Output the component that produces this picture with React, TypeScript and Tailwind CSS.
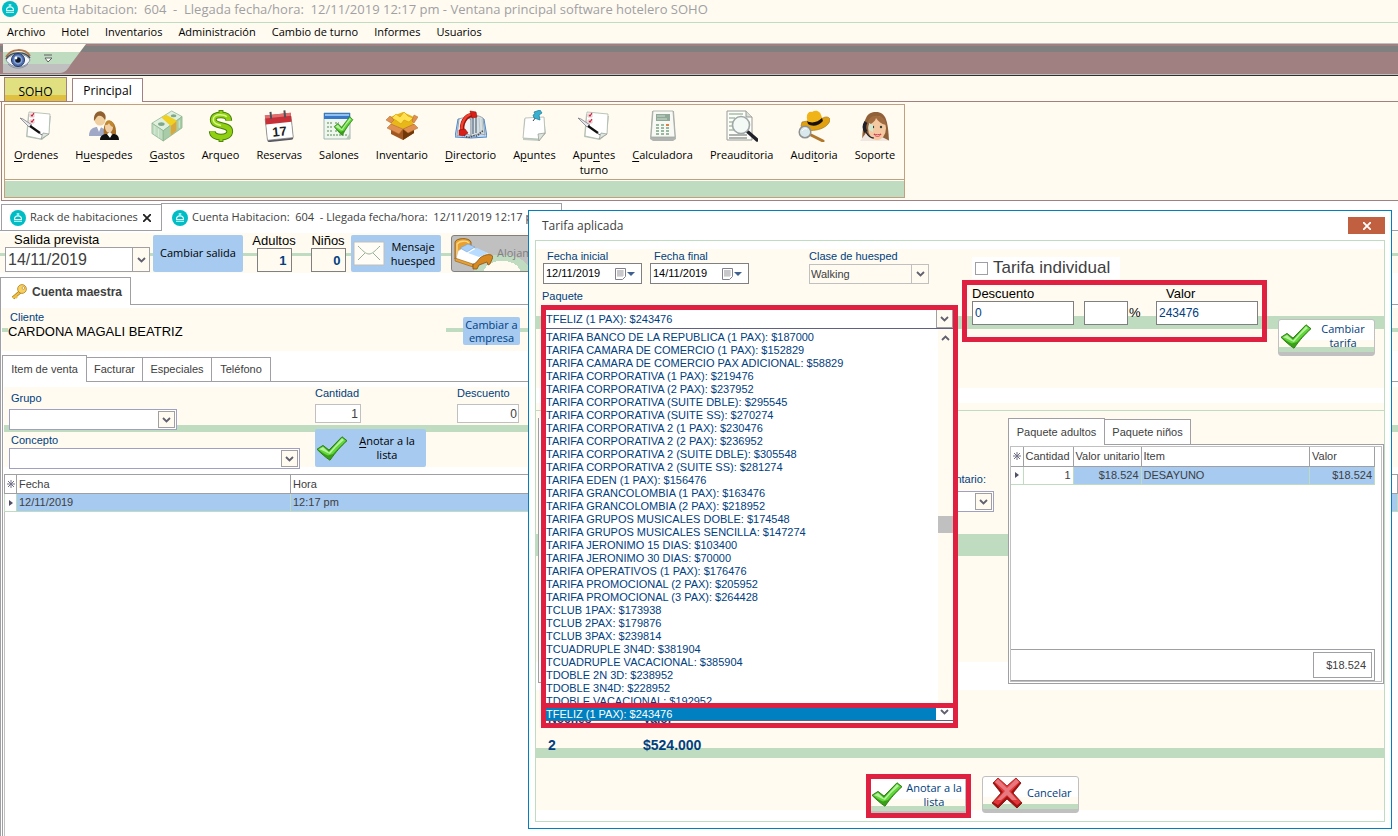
import { useState } from 'react'
import type { ReactNode } from 'react'

const menuItems = ['Archivo', 'Hotel', 'Inventarios', 'Administración', 'Cambio de turno', 'Informes', 'Usuarios']

const tarifas = [
    'TARIFA BANCO DE LA REPUBLICA (1 PAX): $187000',
    'TARIFA CAMARA DE COMERCIO (1 PAX): $152829',
    'TARIFA CAMARA DE COMERCIO PAX ADICIONAL: $58829',
    'TARIFA CORPORATIVA (1 PAX): $219476',
    'TARIFA CORPORATIVA (2 PAX): $237952',
    'TARIFA CORPORATIVA (SUITE DBLE): $295545',
    'TARIFA CORPORATIVA (SUITE SS): $270274',
    'TARIFA CORPORATIVA 2 (1 PAX): $230476',
    'TARIFA CORPORATIVA 2 (2 PAX): $236952',
    'TARIFA CORPORATIVA 2 (SUITE DBLE): $305548',
    'TARIFA CORPORATIVA 2 (SUITE SS): $281274',
    'TARIFA EDEN (1 PAX): $156476',
    'TARIFA GRANCOLOMBIA (1 PAX): $163476',
    'TARIFA GRANCOLOMBIA (2 PAX): $218952',
    'TARIFA GRUPOS MUSICALES DOBLE: $174548',
    'TARIFA GRUPOS MUSICALES SENCILLA: $147274',
    'TARIFA JERONIMO 15 DIAS: $103400',
    'TARIFA JERONIMO 30 DIAS: $70000',
    'TARIFA OPERATIVOS (1 PAX): $176476',
    'TARIFA PROMOCIONAL (2 PAX): $205952',
    'TARIFA PROMOCIONAL (3 PAX): $264428',
    'TCLUB 1PAX: $173938',
    'TCLUB 2PAX: $179876',
    'TCLUB 3PAX: $239814',
    'TCUADRUPLE 3N4D: $381904',
    'TCUADRUPLE VACACIONAL: $385904',
    'TDOBLE 2N 3D: $238952',
    'TDOBLE 3N4D: $228952',
    'TDOBLE VACACIONAL: $192952',
]

// ---- ICONS ----

function BellLogo() {
    return (
        <svg viewBox="0 0 16 16" className="w-4 h-4 shrink-0" aria-hidden="true">
            <circle cx="8" cy="8" r="8" fill="#00bcc4" />
            <path d="M4.5 9.5a3.5 3.6 0 0 1 7 0zM4 11.2h8" fill="none" stroke="#e0ffff" strokeWidth="1.1" />
            <path d="M8 3.6v2M6.6 3.9h2.8" stroke="#e0ffff" strokeWidth="1" />
        </svg>
    )
}

function Eye() {
    return (
        <svg viewBox="0 0 26 22" className="w-[26px] h-[22px]" aria-hidden="true">
            <path d="M1 12C5 5 21 4 25 12C21 21 6 21 1 12z" fill="#f4f6fb" stroke="#8890a0" />
            <path d="M1 9C6 0 20 0 25 8" fill="none" stroke="#b07850" strokeWidth="2" />
            <path d="M1 11C6 3 20 3 25 10" fill="none" stroke="#404858" strokeWidth="1.4" />
            <circle cx="13" cy="12" r="6.5" fill="#5070b0" stroke="#203868" />
            <circle cx="13" cy="12" r="4.4" fill="#88a8dc" />
            <circle cx="13" cy="12" r="2.8" fill="#101828" />
            <circle cx="11" cy="10" r="1.4" fill="#fff" />
            <path d="M3 16C8 22 19 21 23 16" fill="none" stroke="#8894a8" />
        </svg>
    )
}

function NotesIcon() {
    return (
        <svg viewBox="0 0 32 32" className="w-8 h-8" aria-hidden="true">
            <path d="M8 4l23 2-2 18-7 6L6 27z" fill="#c0c8c0" />
            <path d="M9 2l21 2-1 20-8 5-14-3z" fill="#fff" stroke="#a8b8a8" strokeWidth=".8" />
            <path d="M29 24l-6-1-2 6z" fill="#dfe8df" stroke="#909890" strokeWidth=".7" />
            <path d="M10 4h4v3h-4zM10 10h4v3h-4z" fill="#fff" stroke="#d8b0b0" strokeWidth=".7" />
            <path d="M11 5l1 1 2-3M11 11l1 1 2-3" fill="none" stroke="#d02040" strokeWidth="1.2" />
            <path d="M0 8l3 1 9 6-3 2z" fill="#e8e8ec" stroke="#707078" strokeWidth=".7" />
            <path d="M10 16l10 7" stroke="#101010" strokeWidth="2.2" />
            <path d="M19 23l3 2" stroke="#606060" />
        </svg>
    )
}

function PeopleIcon() {
    return (
        <svg viewBox="0 0 32 32" className="w-8 h-8" aria-hidden="true">
            <path d="M1 26c0-7 4-9 9-9s8 3 8 9z" fill="#a0a8c8" />
            <path d="M9 17l2 5 2-5z" fill="#fff" />
            <circle cx="12" cy="10" r="5.5" fill="#f0d0a0" />
            <path d="M6 11C5 2 12-1 16 3c2 2 2 5 1 7-2-4-5-5-7-4-2 1-2 3-4 5z" fill="#906030" />
            <path d="M16 25c-3-18 13-19 12-1l-3 2z" fill="#a87028" />
            <ellipse cx="21" cy="17" rx="4" ry="5.5" fill="#f0d0a8" />
            <path d="M17 15c0-6 8-7 9 2-3 0-4-2-5-4-1 2-2 2-4 2z" fill="#c08830" />
            <path d="M12 30c0-5 4-6 7-6l3 3 3-3c3 0 6 1 6 6z" fill="#101010" />
            <path d="M19 24l3 4 2-4-2-2z" fill="#fff" />
        </svg>
    )
}

function MoneyIcon() {
    return (
        <svg viewBox="0 0 34 34" className="w-8 h-8" aria-hidden="true">
            <path d="M1 14L22 1l11 6v11L13 33 1 25z" fill="#b8d8b8" />
            <path d="M1 14L22 1l11 6L13 22z" fill="#e0f0e0" stroke="#88b088" strokeWidth=".7" />
            <path d="M1 14v11l12 8V22z" fill="#c0dcc0" stroke="#88b088" strokeWidth=".7" />
            <path d="M13 22v11l20-14V7z" fill="#a8cca8" stroke="#88b088" strokeWidth=".7" />
            <path d="M11 8l5-3 11 6v10l-6 5v-9z" fill="#f0d020" />
            <path d="M21 17l6-5v10l-6 5z" fill="#d8a840" />
            <ellipse cx="11" cy="15" rx="3.5" ry="2" fill="#80a888" />
            <ellipse cx="24" cy="6" rx="3" ry="1.6" fill="#80a888" />
            <path d="M4 17v9M8 20v9M30 11v8" stroke="#d8ead8" />
        </svg>
    )
}

function DollarIcon() {
    const s = 'M24 11c0-4-3-6-8-6-5 0-8 2-8 5 0 8 17 4 17 12 0 4-4 6-9 6s-9-2-9-6'
    return (
        <svg viewBox="0 0 32 33" className="w-8 h-8" aria-hidden="true">
            <path d="M16 0v7M16 26v7" stroke="#508818" strokeWidth="5" />
            <path d={s} fill="none" stroke="#488010" strokeWidth="7" />
            <path d="M16 1v6M16 26v6" stroke="#90d010" strokeWidth="3" />
            <path d={s} fill="none" stroke="#90d010" strokeWidth="5" />
            <path d="M22 7c-2-2-4-2-7-2-4 0-7 2-7 5 0 4 4 5 8 6" fill="none" stroke="#d8f890" strokeWidth="1.6" />
        </svg>
    )
}

function CalendarIcon() {
    return (
        <svg viewBox="0 0 32 32" className="w-8 h-8" aria-hidden="true">
            <g transform="rotate(-6 16 16)">
                <rect x="3" y="9" width="26" height="22" rx="2" fill="#585860" />
                <rect x="3" y="7" width="26" height="22" rx="1" fill="#fff" stroke="#808080" strokeWidth=".7" />
                <path d="M3 4h26v9H3z" fill="#c83038" />
                <path d="M3 4h26v3H3z" fill="#e07070" />
                <path d="M9 1v7M23 1v7" stroke="#505058" strokeWidth="2" />
                <text x="16" y="26" textAnchor="middle" fontFamily="Liberation Sans, sans-serif" fontWeight="bold" fontSize="13" fill="#202020">17</text>
            </g>
        </svg>
    )
}

function CheckPath() {
    return (
        <>
            <path d="M1 17l6-5 6 6L26 1l5 5c-6 7-11 14-17 25C9 27 5 22 1 17z" fill="#38a018" stroke="#287810" strokeWidth="1" />
            <path d="M2 17l5-4 6 7L26 2l4 4c-5 6-9 11-13 17l-5 2C8 23 5 20 2 17z" fill="#60d838" />
            <path d="M3 17l4-3 6 7L26 3l2 2C22 11 17 18 14 23 10 21 6 18 3 17z" fill="#b8f0a0" />
        </>
    )
}

function RoomsIcon() {
    return (
        <svg viewBox="0 0 32 32" className="w-8 h-8" aria-hidden="true">
            <path d="M1 3h26v26H1z" fill="#eef6ee" stroke="#a0b8b0" />
            <path d="M1 3h26v6H1z" fill="#3878c8" />
            <path d="M2 4h24v2H2z" fill="#90c0f0" />
            <path d="M4 13h5M4 17h5M4 21h5M4 25h20M12 21h8M12 13h4" stroke="#a0c0a0" strokeWidth="2" strokeDasharray="2 1" />
            <path d="M23 29l4-6v6z" fill="#b8c8b8" />
            <svg x="9" y="6" width="23" height="20" viewBox="0 0 32 32"><CheckPath /></svg>
        </svg>
    )
}

function BoxIcon() {
    return (
        <svg viewBox="0 0 32 32" className="w-8 h-8" aria-hidden="true">
            <path d="M5 14l12 5 11-5v9l-11 7L5 24z" fill="#a05820" />
            <path d="M17 19l11-5v9l-11 7z" fill="#703808" />
            <path d="M4 7l13-5 11 5-1 8-10 4-12-5z" fill="#e8b818" />
            <path d="M6 8l4-4 4 3 4-5 4 4 5 2-4 4-5-2-3 4-4-3z" fill="#ffe050" stroke="#d09810" strokeWidth=".6" />
            <path d="M5 13l-5-3 4-4 4 4zM5 14l-4 4 12 6 4-5zM28 14l4 4-10 5-5-4zM28 13l4-6-4-2-2 6z" fill="#e09050" stroke="#b06828" strokeWidth=".5" />
        </svg>
    )
}

function PhoneBookIcon() {
    return (
        <svg viewBox="0 0 32 32" className="w-8 h-8" aria-hidden="true">
            <path d="M3 9h26l3 18-16 1-16-1z" fill="#c8dcf4" stroke="#4888d0" />
            <path d="M4 9c5-2 9-2 12 1v16c-4-3-9-2-14 0z" fill="#f0f4f4" stroke="#808890" strokeWidth=".7" />
            <path d="M16 7c4-2 7-2 12 1l2 17c-5-2-10-1-14 2z" fill="#d8e0e0" stroke="#808890" strokeWidth=".7" />
            <path d="M18 8v16M21 7v16" stroke="#8898a8" strokeWidth="2" />
            <path d="M24 8l1 15M27 9l1 14" stroke="#b8c8d0" />
            <path d="M9 25c5 5 8 0 11 1s5-4 8-5" fill="none" stroke="#505050" strokeWidth="1.6" strokeDasharray="1.5 1" />
            <path d="M8 23C5 13 11 5 18 5" fill="none" stroke="#a01008" strokeWidth="4.5" />
            <path d="M7 22C5 13 11 4 18 4" fill="none" stroke="#f04030" strokeWidth="2.5" />
            <path d="M15 1l6 1 1 5-5 1zM4 20l6-1 3 4-5 3-4-1z" fill="#d82018" stroke="#901008" strokeWidth=".6" />
        </svg>
    )
}

function PinNoteIcon() {
    return (
        <svg viewBox="0 0 32 32" className="w-8 h-8" aria-hidden="true">
            <path d="M6 9l20-2 2 16-7 8-16-1z" fill="#c0ccc0" />
            <path d="M7 8l19-1 1 17-7 5-15-1z" fill="#fff" stroke="#b0b8b0" strokeWidth=".8" />
            <path d="M27 23l-7 1 1 7z" fill="#dce4dc" stroke="#909890" strokeWidth=".7" />
            <path d="M15 11l3-4" stroke="#404040" />
            <path d="M16 2l6-2 2 3-3 2 1 5-6-2-1-3 2-1z" fill="#38b0d0" stroke="#187898" strokeWidth=".7" />
        </svg>
    )
}

function CalculatorIcon() {
    return (
        <svg viewBox="0 0 32 32" className="w-8 h-8" aria-hidden="true">
            <path d="M5 1h22l2 28-3 2H6l-3-2z" fill="#b0b4b0" />
            <path d="M6 1h20l2 26H4z" fill="#f8f8f4" stroke="#a0a8a0" strokeWidth=".8" />
            <path d="M9 4h14v7H9z" fill="#90a898" />
            <path d="M10 6h8M10 9h10" stroke="#d0e0d0" />
            <path d="M9 15h3M14 15h3M9 18h3M14 18h3M19 18h3M9 21h3M14 21h3M19 21h3M9 24h3M14 24h3M19 24h3" stroke="#98b8a0" strokeWidth="2" />
            <path d="M19 15h3" stroke="#e08040" strokeWidth="2" />
        </svg>
    )
}

function AuditIcon() {
    return (
        <svg viewBox="0 0 32 32" className="w-8 h-8" aria-hidden="true">
            <path d="M1 1h19l6 6v23H1z" fill="#fdfdfa" stroke="#989c98" />
            <path d="M20 1v6h6" fill="#d8e0d8" stroke="#989c98" />
            <path d="M3 4h14M3 8h6M3 12h4M3 16h4M3 20h6" stroke="#a8c0a8" strokeWidth="1.5" />
            <path d="M3 25h18M3 28h18" stroke="#b0b4b0" strokeWidth="2" />
            <path d="M22 22l9 8" stroke="#202028" strokeWidth="3.4" strokeLinecap="round" />
            <circle cx="15" cy="15" r="8.5" fill="#f4faf6" stroke="#a0a8a8" strokeWidth="1.6" />
        </svg>
    )
}

function HatIcon() {
    return (
        <svg viewBox="0 0 32 32" className="w-8 h-8" aria-hidden="true">
            <path d="M3 16c3 8 27 5 29-6 0-3-4-4-7-2L4 12z" fill="#e0a010" stroke="#a06808" strokeWidth=".6" />
            <path d="M9 9c-1-5 2-8 5-7 4-3 9-1 10 6l1 3c-4 5-11 6-15 3z" fill="#f0b418" />
            <path d="M9 11c5 3 11 1 15-3l1 3c-4 5-11 6-15 3z" fill="#181008" />
            <path d="M11 24l14 7" stroke="#b07828" strokeWidth="3" strokeLinecap="round" />
            <circle cx="7" cy="22" r="5.8" fill="#d8e8ec" stroke="#909090" strokeWidth="1.5" />
            <path d="M4 21c1-2 3-3 5-2" stroke="#fff" fill="none" />
        </svg>
    )
}

function SupportIcon() {
    return (
        <svg viewBox="0 0 32 32" className="w-8 h-8" aria-hidden="true">
            <path d="M3 31C4 8 8 2 17 2c10 0 12 9 13 29z" fill="#906038" />
            <path d="M1 31l6-8 7 6 9-2 8 4z" fill="#f0e8e0" />
            <ellipse cx="18" cy="18" rx="9" ry="12" fill="#f4c8a0" />
            <path d="M8 16C9 7 14 5 19 6c5 0 8 5 8 9-5-1-8-4-10-7-1 4-5 6-9 8z" fill="#a06c40" />
            <circle cx="14" cy="17" r="1.2" fill="#304030" />
            <circle cx="22" cy="17" r="1.2" fill="#304030" />
            <path d="M10 13l4 2v7l-4-2z" fill="#d0e8d0" />
            <path d="M15 24c2 1 5 1 7 0-1 3-6 3-7 0z" fill="#fff" stroke="#d03040" strokeWidth="1" />
            <path d="M7 12c-2 3-2 7 0 10" stroke="#202028" strokeWidth="3.5" fill="none" />
            <path d="M7 22c2 4 5 6 8 6" stroke="#202028" strokeWidth="1.2" fill="none" />
        </svg>
    )
}

function CheckIcon() {
    return (
        <svg viewBox="0 0 32 32" preserveAspectRatio="none" className="w-8 h-[25px] shrink-0" aria-hidden="true">
            <CheckPath />
        </svg>
    )
}

function CrossIcon() {
    return (
        <svg viewBox="0 0 32 32" className="w-8 h-8 shrink-0" aria-hidden="true">
            <path d="M2 6l5-5 9 8 9-8 5 5-8 10 9 10-5 5-10-9-9 9-6-5 9-10z" fill="#a81010" stroke="#780808" strokeWidth=".8" />
            <path d="M3 5l4-4 9 8 9-8 4 4-9 10 10 10-4 3-10-9-9 9-5-3 10-10z" fill="#e03838" />
            <path d="M4 5l3-3 9 9 9-9 3 3-10 9 8 9h-5l-5-5-6 5H6l8-9z" fill="#e87880" />
        </svg>
    )
}

function EnvelopeIcon() {
    return (
        <svg viewBox="0 0 32 25" className="w-8 h-[25px] shrink-0" aria-hidden="true">
            <path d="M1 1h30v23H1z" fill="#fffdf6" stroke="#c0c0b8" />
            <path d="M5 5c5 5 8 8 11 8s6-3 11-8M5 19l7-7M27 19l-7-7" fill="none" stroke="#98b098" />
        </svg>
    )
}

function BedIcon() {
    return (
        <svg viewBox="0 0 40 32" className="w-10 h-8 shrink-0" aria-hidden="true">
            <path d="M2 21V4c1-4 14-5 16 0v5L6 22z" fill="#e8a030" stroke="#805010" strokeWidth=".8" />
            <path d="M4 18V6c2-3 10-4 12-1" fill="none" stroke="#ffd880" strokeWidth="1.4" />
            <path d="M5 13l9-6 23 9-3 9-12 3L3 21z" fill="#fff" stroke="#c0b8a8" strokeWidth=".6" />
            <path d="M7 10l8-4 7 3-8 5z" fill="#a8d0f8" stroke="#6898d0" strokeWidth=".5" />
            <path d="M15 15l9-5 11 5-9 4z" fill="#b8dcff" />
            <path d="M2 20l18 6v3L2 23z" fill="#e8a030" stroke="#805010" strokeWidth=".5" />
            <path d="M20 31v-5c4 0 5-6 10-8 4-2 9-2 10 1l-3 7-2 1-1-3-8 3-2 4z" fill="#d88820" stroke="#805010" strokeWidth=".8" />
        </svg>
    )
}

function KeyIcon() {
    return (
        <svg viewBox="0 0 16 16" className="w-4 h-4 shrink-0" aria-hidden="true">
            <path d="M9 8l-7 6" stroke="#a87818" strokeWidth="3.6" />
            <path d="M9 8l-7 6M4 12l2 2" stroke="#f0c040" strokeWidth="2.2" />
            <circle cx="11" cy="5" r="4.4" fill="#f8d060" stroke="#b08020" strokeWidth=".8" />
            <circle cx="12.4" cy="4" r="1.3" fill="#fff" stroke="#b08020" strokeWidth=".6" />
        </svg>
    )
}

function CloseMark({ color }: { color: string }) {
    return <svg viewBox="0 0 8 8" className="w-2 h-2" aria-hidden="true"><path d="M0 0l8 8M8 0L0 8" stroke={color} strokeWidth="1.8" /></svg>
}

function Chevron({ up = false }: { up?: boolean }) {
    return (
        <svg viewBox="0 0 9 6" className="w-[9px] h-[6px]" aria-hidden="true">
            <path d={up ? 'M1 5l3.5-3.5L8 5' : 'M1 1l3.5 3.5L8 1'} fill="none" stroke="#606070" strokeWidth="1.8" />
        </svg>
    )
}

function MiniCalendar() {
    return (
        <svg viewBox="0 0 20 12" className="w-5 h-3 shrink-0" aria-hidden="true">
            <path d="M.5.5h10v8l-3 3h-7z" fill="#fff" stroke="#808090" />
            <path d="M2 3h7M2 5h7M2 7h7M3 2v7M5 2v7M7 2v7" stroke="#a0a0a4" strokeWidth=".7" />
            <path d="M12 4h8l-4 4z" fill="#406090" />
        </svg>
    )
}

function RowMark() {
    return <svg viewBox="0 0 4 6" className="w-1 h-1.5 mx-auto" aria-hidden="true"><path d="M0 0l4 3-4 3z" fill="#505068" /></svg>
}

function StarMark() {
    return (
        <svg viewBox="0 0 8 8" className="w-2 h-2 mx-auto" aria-hidden="true">
            <path d="M4 0v8M0 4h8M1 1l6 6M7 1l-6 6" stroke="#707088" strokeWidth="1" />
        </svg>
    )
}

// ---- CONTROLS ----

const ribbon: { icon: ReactNode; label: ReactNode; id: string }[] = [
    { id: 'ordenes', icon: <NotesIcon />, label: <><u>O</u>rdenes</> },
    { id: 'huespedes', icon: <PeopleIcon />, label: <>H<u>u</u>espedes</> },
    { id: 'gastos', icon: <MoneyIcon />, label: <><u>G</u>astos</> },
    { id: 'arqueo', icon: <DollarIcon />, label: 'Arqueo' },
    { id: 'reservas', icon: <CalendarIcon />, label: 'Reservas' },
    { id: 'salones', icon: <RoomsIcon />, label: 'Salones' },
    { id: 'inventario', icon: <BoxIcon />, label: 'Inventario' },
    { id: 'directorio', icon: <PhoneBookIcon />, label: <><u>D</u>irectorio</> },
    { id: 'apuntes', icon: <PinNoteIcon />, label: <>A<u>p</u>untes</> },
    { id: 'turno', icon: <NotesIcon />, label: <>Apu<u>n</u>tes<br />turno</> },
    { id: 'calculadora', icon: <CalculatorIcon />, label: <><u>C</u>alculadora</> },
    { id: 'preauditoria', icon: <AuditIcon />, label: 'Preauditoria' },
    { id: 'auditoria', icon: <HatIcon />, label: <>Audi<u>t</u>oria</> },
    { id: 'soporte', icon: <SupportIcon />, label: 'Soporte' },
]

function Combo({ id, value = '', className = '' }: { id: string; value?: string; className?: string }) {
    return (
        <div className={`flex items-center border border-[#a0a0c0] bg-white p-px ${className}`}>
            <select id={id} className="appearance-none flex-1 min-w-0 h-full pl-px bg-transparent text-[#404040] outline-none">
                <option>{value}</option>
            </select>
            <span className="w-[17px] h-full shrink-0 border border-[#a0a0a4] bg-[#fffbf0] grid place-items-center pointer-events-none">
                <Chevron />
            </span>
        </div>
    )
}

const softButton = 'flex items-center rounded-[3px] border border-[#c0c0c0] pb-[3px] text-[#004080] bg-[linear-gradient(#fff_0_20px,#fffbf0_20px_27px,#c0dcc0_27px_32px,#c0c0c0_32px)]'

// ---- SECTIONS ----

function Header() {
    return (
        <header className="bg-[#fffbf0] font-['Open_Sans',sans-serif] text-black">
            <div className="flex items-center gap-1 h-[23px] pb-1 pl-[2px] border-b border-[#c0dcc0]">
                <BellLogo />
                <h1 className="text-[13px] leading-4 text-[#a0a0a4] whitespace-pre">Cuenta Habitacion:  604  -  Llegada fecha/hora:  12/11/2019 12:17 pm - Ventana principal software hotelero SOHO</h1>
            </div>
            <nav className="flex items-center gap-4 h-5 pb-0.5 pl-[7px] text-[11px] leading-4">
                {menuItems.map((item) => (
                    <button key={item} type="button">{item}</button>
                ))}
            </nav>
            {/* Quick access bar */}
            <div className="h-[33px] bg-[linear-gradient(#c0c0c0_0_1px,#a08080_1px_3px,#808080_3px_9px,#a08080_9px_31px,#c0c0c0_31px_32px,#303030_32px)]">
                <div className="relative w-[90px] h-[31px]">
                    <svg viewBox="0 0 90 31" className="absolute inset-0 w-full h-full" aria-hidden="true">
                        <path d="M3 1h83l-6 8H3z" fill="#fffbf0" />
                        <path d="M3 9h77l-9 12H3z" fill="#c0dcc0" />
                        <path d="M3 21h68c-3 5-6 9-11 9H3z" fill="#c0c0c0" />
                        <path d="M44 12h8M45 15l3 4 4-4z" stroke="#606060" fill="#fff" />
                    </svg>
                    <div className="relative pl-[5px] pt-[5px]"><Eye /></div>
                </div>
            </div>
            {/* Ribbon tabs */}
            <div className="flex items-end gap-[5px] h-[26px] pl-1 text-[12px] border-b border-[#a08080]">
                <button type="button" className="w-[63px] h-6 pt-1 border border-b-0 border-[#a08080] bg-[linear-gradient(#e0e080_0_17px,#e0c040_17px)]">SOHO</button>
                <button type="button" className="w-[71px] h-6 -mb-px pb-px pt-0.5 border border-b-0 border-[#a08080] bg-white">Principal</button>
            </div>
            <div className="ml-px pl-[2px] pt-[2px] pb-[2px] border-l border-b border-[#a08080] flex">
                <div className="border border-[#c0a080]">
                    <div className="flex items-start gap-[17px] h-[74px] px-[9px] pt-[5px] text-[11px] leading-[15px]">
                        {ribbon.map((item) => (
                            <button key={item.id} type="button" className="flex flex-col items-center gap-[5px] underline-offset-2">
                                {item.icon}
                                <span>{item.label}</span>
                            </button>
                        ))}
                    </div>
                    <div className="border-t border-[#c0a080] pt-px">
                        <div className="h-4 bg-[#c0dcc0]" />
                    </div>
                </div>
            </div>
        </header>
    )
}

function Account() {
    return (
        <main className="bg-white font-['Liberation_Sans',sans-serif] text-[11px] text-[#404040]">
            {/* Window tabs */}
            <div className="flex items-end h-[30px] border-b border-[#a0a0a4] font-['Open_Sans',sans-serif]">
                <button type="button" className="flex items-center gap-1 w-[160px] h-[26px] ml-px pl-2 border-l border-t border-[#a0a0a4]">
                    <BellLogo />
                    <span className="whitespace-nowrap">Rack de habitaciones</span>
                    <span className="ml-auto mr-[10px]"><CloseMark color="#202020" /></span>
                </button>
                <button type="button" className="flex items-center gap-1 w-[401px] h-7 -mb-px pl-[10px] border border-b-0 border-[#a0a0a4] bg-white">
                    <BellLogo />
                    <span className="whitespace-pre">Cuenta Habitacion:  604  - Llegada fecha/hora:  12/11/2019 12:17 pm</span>
                </button>
            </div>
            {/* Stay bar */}
            <div className="mt-[2px] flex items-end h-10 pb-px pl-[5px] text-black bg-[linear-gradient(#fffbf0_0_20px,#c0dcc0_20px_23px,#fffbf0_23px)]">
                <div className="w-[145px]">
                    <label htmlFor="salida" className="block pl-[9px] text-[13px] leading-[14px]">Salida prevista</label>
                    <div className="flex h-[25px] border border-[#a0a0a4] bg-white">
                        <select id="salida" className="appearance-none flex-1 pl-0.5 text-base leading-5 text-[#404040]"><option>14/11/2019</option></select>
                        <span className="w-[17px] border-l border-[#a0a0a4] bg-[#fffbf0] grid place-items-center pointer-events-none"><Chevron /></span>
                    </div>
                </div>
                <button type="button" className="ml-[3px] w-[90px] h-[37px] rounded-[2px] bg-[#a6caf0] font-['Open_Sans',sans-serif] whitespace-nowrap">Cambiar salida</button>
                <div className="ml-2 w-[46px] flex flex-col items-center">
                    <label htmlFor="adultos" className="text-[13px] leading-[14px]">Adultos</label>
                    <input id="adultos" defaultValue="1" className="w-[35px] h-6 border border-[#808080] bg-[#fffbf0] text-right pr-1 font-bold text-[13px] text-[#004080]" />
                </div>
                <div className="ml-2 w-[46px] flex flex-col items-center">
                    <label htmlFor="ninos" className="text-[13px] leading-[14px]">Niños</label>
                    <input id="ninos" defaultValue="0" className="w-[35px] h-6 border border-[#808080] bg-[#fffbf0] text-right pr-1 font-bold text-[13px] text-[#004080]" />
                </div>
                <button type="button" className="w-[90px] h-[37px] rounded-[2px] bg-[#a6caf0] flex items-center pl-[2px] font-['Open_Sans',sans-serif] leading-[14px]">
                    <EnvelopeIcon />
                    <span className="flex-1 text-center">Mensaje huesped</span>
                </button>
                <button type="button" className="ml-[10px] w-[110px] h-[37px] rounded-[3px] border border-[#808080] flex items-center pl-px font-['Open_Sans',sans-serif] text-[#808080] bg-[radial-gradient(ellipse_at_50px_36px,#fffbf0_0_18px,#c0dcc0_18px_28px,#c0c0c0_28px)]">
                    <BedIcon />
                    <span className="pl-1">Alojam</span>
                </button>
            </div>
            {/* Account tab */}
            <div className="flex items-end mt-1 border-b border-[#a0a0a4]">
                <button type="button" className="-mb-px flex items-center gap-[5px] w-[131px] h-7 pl-[10px] border border-b-0 border-[#a0a0a4] bg-white text-[12px] font-bold whitespace-nowrap">
                    <KeyIcon />
                    Cuenta maestra
                </button>
            </div>
            <div className="border-l border-[#a0a0a4] pl-px pt-[3px]">
                <div className="flex h-[43px] items-stretch bg-[#fffbf0] bg-[linear-gradient(#c0dcc0,#c0dcc0)] bg-no-repeat bg-[size:6px_4px] bg-[position:0_20px]">
                    <div className="w-[444px] pl-[6px] pt-[3px]">
                        <p className="leading-[13px] pl-[2px] text-[#004080]">Cliente</p>
                        <p className="text-[13px] leading-4 text-black">CARDONA MAGALI BEATRIZ</p>
                    </div>
                    <div className="flex-1 pl-[17px] pt-[9px] bg-[linear-gradient(transparent_0_20px,#c0dcc0_20px_24px,transparent_24px)]">
                        <button type="button" className="w-[57px] h-7 rounded-[2px] bg-[#a6caf0] text-[#004080] leading-[13px] font-['Open_Sans',sans-serif]">Cambiar a empresa</button>
                    </div>
                </div>
                {/* Item tabs */}
                <div className="flex items-end mt-1 border-b border-[#a0a0a4] *:border-[#a0a0a4] *:whitespace-nowrap">
                    <button type="button" className="-mb-px w-[85px] h-[27px] border border-b-0 bg-white">Item de venta</button>
                    <button type="button" className="w-14 h-6 border-t border-r">Facturar</button>
                    <button type="button" className="w-[69px] h-6 border-t border-r">Especiales</button>
                    <button type="button" className="w-[59px] h-6 border-t border-r">Teléfono</button>
                </div>
                <div className="border-l border-[#a0a0a4] pl-px pt-[5px]">
                    <div className="flex items-start h-20 pl-[5px] text-[#004080] bg-[linear-gradient(#fffbf0_0_38px,#c0dcc0_38px_45px,#fffbf0_45px)]">
                        <div className="w-[306px] pt-[5px]">
                            <label htmlFor="grupo" className="block pl-[2px] leading-[13px]">Grupo</label>
                            <Combo id="grupo" className="mt-1 w-[168px] h-[21px]" />
                            <label htmlFor="concepto" className="block mt-1 pl-[2px] leading-[13px]">Concepto</label>
                            <Combo id="concepto" className="mt-px w-[291px] h-[21px]" />
                        </div>
                        <div className="w-[142px]">
                            <label htmlFor="cantidad" className="block leading-[13px]">Cantidad</label>
                            <input id="cantidad" defaultValue="1" className="block mt-1 w-[46px] h-[19px] border border-[#c0c0c0] bg-white text-right px-0.5 text-[12px] text-[#404040]" />
                            <button type="button" className="mt-[6px] w-[111px] h-[38px] rounded-[2px] bg-[#a6caf0] text-black flex items-center pl-px leading-[14px] underline-offset-2 font-['Open_Sans',sans-serif]">
                                <CheckIcon />
                                <span className="flex-1 px-1 text-center"><u>A</u>notar a la lista</span>
                            </button>
                        </div>
                        <div className="w-[70px]">
                            <label htmlFor="descuento-item" className="block leading-[13px]">Descuento</label>
                            <input id="descuento-item" defaultValue="0" className="block mt-1 w-[62px] h-[19px] border border-[#c0c0c0] bg-white text-right px-px text-[12px] text-[#404040]" />
                        </div>
                    </div>
                    <table className="mt-[7px] w-full table-fixed border-collapse border-t border-l border-[#c0c0c0]">
                        <colgroup>
                            <col className="w-3" />
                            <col className="w-[274px]" />
                            <col />
                        </colgroup>
                        <thead>
                            <tr className="h-[19px] *:border *:border-[#a0a0a4] *:text-left *:font-normal *:pl-[2px]">
                                <th className="!pl-0"><StarMark /></th>
                                <th>Fecha</th>
                                <th>Hora</th>
                            </tr>
                        </thead>
                        <tbody>
                            <tr className="h-[18px] bg-[#a6caf0] *:border *:border-[#c0dcc0] *:pl-[2px]">
                                <td className="bg-white !pl-0"><RowMark /></td>
                                <td>12/11/2019</td>
                                <td>12:17 pm</td>
                            </tr>
                        </tbody>
                    </table>
                    <div className="h-[330px] border-l border-[#c0c0c0]" />
                </div>
            </div>
        </main>
    )
}

function DateField({ id, label, value }: { id: string; label: string; value: string }) {
    return (
        <div>
            <label htmlFor={id} className="block pl-1 leading-[14px]">{label}</label>
            <div className="flex items-center w-[99px] h-[21px] pr-[6px] border border-[#808080] bg-white">
                <input id={id} defaultValue={value} className="flex-1 min-w-0 pl-[2px] text-black outline-none" />
                <MiniCalendar />
            </div>
        </div>
    )
}

function RateList() {
    return (
        <div className="absolute z-10 left-0 top-0 w-full border-[5px] border-b-0 border-[#e02040]">
            <div className="flex h-[19px] border-b border-[#606080] bg-white">
                <select id="paquete" className="appearance-none flex-1 outline-none"><option>TFELIZ (1 PAX): $243476</option></select>
                <span className="w-[17px] border border-t-0 border-[#a0a0a4] bg-[#fffbf0] grid place-items-center pointer-events-none"><Chevron /></span>
            </div>
            <div className="flex h-[374px] bg-white">
                <ul role="listbox" aria-label="Paquete" className="flex-1 pt-[2px] overflow-hidden leading-[13px] whitespace-nowrap">
                    {tarifas.map((t) => <li key={t} role="option" aria-selected="false">{t}</li>)}
                </ul>
                <div className="w-[15px] pt-[6px] bg-[#fffbf0] flex flex-col items-center">
                    <Chevron up />
                    <div className="mt-[175px] w-full h-[17px] bg-[#c0c0c0]" />
                </div>
            </div>
            <div className="-mx-[5px] border-[5px] border-[#e02040]">
                <div className="flex h-[13px] border-b border-[#606080] leading-3">
                    <div className="flex-1 bg-[#0080c0] text-white">TFELIZ (1 PAX): $243476</div>
                    <span className="w-[17px] pt-px bg-white grid place-items-start justify-center"><Chevron /></span>
                </div>
                <div className="h-[2px]" />
            </div>
        </div>
    )
}

function Dialog({ onClose }: { onClose: () => void }) {
    return (
        <div role="dialog" aria-label="Tarifa aplicada" className="absolute z-20 top-[210px] left-[528px] right-[6px] border border-[#0080c0] bg-white p-[6px] pt-0 font-['Liberation_Sans',sans-serif] text-[11px] text-[#004080]">
            <div className="flex items-center justify-between h-[29px] pl-[7px]">
                <h2 className="font-['Open_Sans',sans-serif] text-[12px] text-[#404040]">Tarifa aplicada</h2>
                <button type="button" aria-label="Cerrar" onClick={onClose} className="w-[37px] h-[17px] bg-[#c06040] grid place-items-center">
                    <CloseMark color="#fff" />
                </button>
            </div>
            <div className="border border-[#c0dcc0]">
                {/* Rate */}
                <section className="relative flex h-[170px] pt-2 pl-[5px] bg-[linear-gradient(#fff_0_8px,#fffbf0_8px_75px,#c0dcc0_75px_88px,#fffbf0_88px_147px,#fff_147px_162px,#fffbf0_162px_169px,#c0dcc0_169px)]">
                    <div className="w-[417px] shrink-0">
                        <div className="flex pl-[2px]">
                            <DateField id="inicial" label="Fecha inicial" value="12/11/2019" />
                            <div className="w-2" />
                            <DateField id="final" label="Fecha final" value="14/11/2019" />
                            <div className="ml-[60px]">
                                <label htmlFor="clase" className="block leading-[15px]">Clase de huesped</label>
                                <div className="flex w-[120px] h-5 border border-[#c0c0c0]">
                                    <select id="clase" className="appearance-none flex-1 pl-px text-[#404040] outline-none"><option>Walking</option></select>
                                    <span className="w-[17px] border-l border-[#c0c0c0] grid place-items-center pointer-events-none"><Chevron /></span>
                                </div>
                            </div>
                        </div>
                        <label htmlFor="paquete" className="block mt-[5px] pl-px leading-[14px]">Paquete</label>
                        <div className="relative mt-[2px]"><RateList /></div>
                    </div>
                    <div className="ml-1 pt-2">
                        <label className="ml-[10px] flex items-center gap-[5px] w-[148px] h-[22px] pl-[3px] bg-white text-[17px] whitespace-nowrap text-[#404040]">
                            <input type="checkbox" className="appearance-none w-[13px] h-[13px] border border-[#a0a0a4] bg-white" />
                            Tarifa individual
                        </label>
                        <div className="mt-px w-[305px] h-[62px] pt-[2px] pl-[5px] border-[5px] border-[#e02040] flex text-[12px]">
                            <div className="w-[102px]">
                                <label htmlFor="descuento" className="block leading-[14px] text-[13px] text-black">Descuento</label>
                                <input id="descuento" defaultValue="0" className="block w-full h-6 px-[2px] border border-[#808080] bg-white" />
                            </div>
                            <div className="ml-[10px] flex items-end h-[38px]">
                                <input id="porcentaje" aria-label="Porcentaje" className="w-11 h-6 border border-[#808080] bg-white" />
                                <label htmlFor="porcentaje" className="pl-px pb-1 leading-4 text-black text-[13px]">%</label>
                            </div>
                            <div className="ml-auto mr-1 w-[102px]">
                                <label htmlFor="valor" className="block pl-[10px] leading-[14px] text-[13px] text-black">Valor</label>
                                <input id="valor" defaultValue="243476" className="block w-full h-6 px-[2px] border border-[#808080] bg-white" />
                            </div>
                        </div>
                    </div>
                    <button type="button" className={`${softButton} ml-[11px] mt-[70px] w-[97px] h-[37px] pl-px font-['Open_Sans',sans-serif] leading-[14px]`}>
                        <CheckIcon />
                        <span className="flex-1 text-center">Cambiar tarifa</span>
                    </button>
                </section>
                {/* Package contents */}
                <section className="flex justify-between items-start h-[279px] pt-[7px] pl-[2px] bg-[linear-gradient(#fffbf0_0_123px,#c0dcc0_123px_145px,#fffbf0_145px_251px,#fff_251px)]">
                    <div className="w-[4px] h-[265px] border-l border-b border-[#a0a0a4] bg-white" />
                    <div className="w-[140px] ml-auto mr-[14px] pt-[54px]">
                        <label htmlFor="item-inventario" className="block mr-2 text-right leading-[15px]">Inventario:</label>
                        <Combo id="item-inventario" className="mt-1 h-[21px]" />
                    </div>
                    <div className="w-[376px]">
                        <div className="flex items-end border-b border-[#a0a0a4] text-[#404040] *:border-[#a0a0a4] *:whitespace-nowrap">
                            <button type="button" className="-mb-px w-[97px] h-[27px] border border-b-0 bg-white">Paquete adultos</button>
                            <button type="button" className="w-[86px] h-[25px] border-t border-r bg-white">Paquete niños</button>
                        </div>
                        <div className="border border-t-0 border-[#a0a0a4] bg-white p-px">
                            <div className="flex flex-col h-[236px] border border-[#c0c0c0] pr-[6px] text-[#404040]">
                                <table className="w-full table-fixed border-collapse">
                                    <colgroup>
                                        <col className="w-3" />
                                        <col className="w-[50px]" />
                                        <col className="w-[68px]" />
                                        <col />
                                        <col className="w-[65px]" />
                                    </colgroup>
                                    <thead>
                                        <tr className="h-[19px] *:border-b *:border-r *:border-[#a0a0a4] *:px-[2px] *:font-normal *:text-left *:whitespace-nowrap">
                                            <th className="!px-0"><StarMark /></th>
                                            <th>Cantidad</th>
                                            <th>Valor unitario</th>
                                            <th>Item</th>
                                            <th>Valor</th>
                                        </tr>
                                    </thead>
                                    <tbody>
                                        <tr className="h-[18px] bg-[#a6caf0] *:border-b *:border-r *:border-[#c0dcc0] *:px-[2px]">
                                            <td className="bg-white !px-0"><RowMark /></td>
                                            <td className="bg-white text-right">1</td>
                                            <td className="text-right">$18.524</td>
                                            <td>DESAYUNO</td>
                                            <td className="text-right">$18.524</td>
                                        </tr>
                                    </tbody>
                                </table>
                                <div className="mt-auto flex justify-end h-8 p-[2px] border-t border-r border-b border-[#a0a0a4]">
                                    <output className="w-[59px] pr-[5px] border border-[#a0a0a4] flex items-center justify-end">$18.524</output>
                                </div>
                            </div>
                        </div>
                    </div>
                </section>
                {/* Totals */}
                <section className="h-[131px] pl-3 bg-[linear-gradient(#fffbf0_0_58px,#c0dcc0_58px_68px,#fffbf0_68px_120px,#fff_120px)]">
                    <dl className="grid grid-cols-[95px_95px] pt-[22px] font-bold text-[12px] leading-[14px]">
                        <dt>Noches</dt>
                        <dt>Valor</dt>
                        <dd className="pt-[12px] text-[14px]">2</dd>
                        <dd className="pt-[12px] text-[14px]">$524.000</dd>
                    </dl>
                    <div className="flex items-start gap-[11px] pl-[318px] pt-[22px] font-['Open_Sans',sans-serif] leading-[14px]">
                        <div className="border-[5px] border-[#e02040]">
                            <button type="button" className={`${softButton} w-[95px] h-[34px] border-l-0 border-y-0 rounded-none`}>
                                <CheckIcon />
                                <span className="flex-1 text-center">Anotar a la lista</span>
                            </button>
                        </div>
                        <button type="button" onClick={onClose} className={`${softButton} mt-0.5 w-[97px] h-[37px] pl-2 gap-1`}>
                            <CrossIcon />
                            Cancelar
                        </button>
                    </div>
                </section>
            </div>
        </div>
    )
}

function App() {
    const [open, setOpen] = useState(true)

    return (
        <div className="relative min-h-screen overflow-hidden bg-white">
            <Header />
            <Account />
            {open && <Dialog onClose={() => setOpen(false)} />}
        </div>
    )
}
export default App
